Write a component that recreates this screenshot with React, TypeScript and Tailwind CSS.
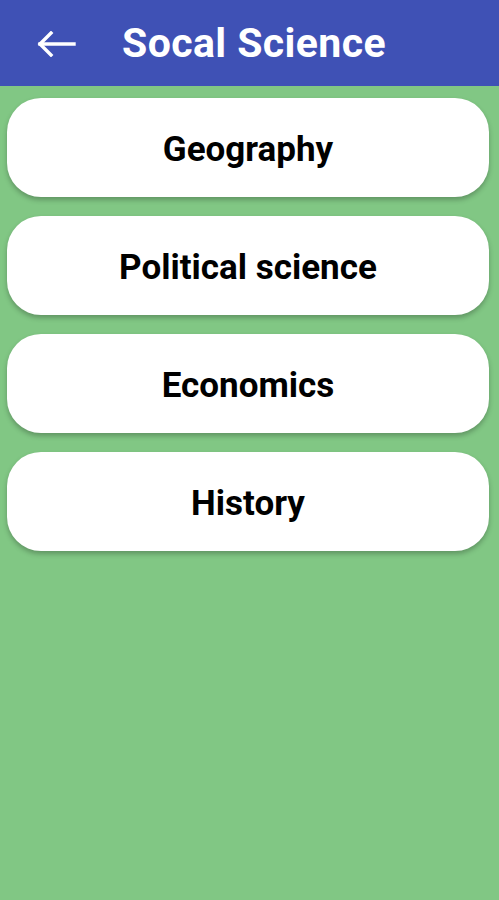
import React from 'react'

const subjects = ['Geography', 'Political science', 'Economics', 'History']

function BackArrow() {
  return (
    <svg width="40" height="26" viewBox="0 0 40 26" fill="none" stroke="white" strokeWidth="3.4" strokeLinecap="square">
      <path d="M3 13 H37" />
      <path d="M14 2 L3 13 L14 24" />
    </svg>
  )
}

export default function App() {
  return (
    <div className="w-[499px] h-[900px] bg-[#81c784] flex flex-col" style={{ fontFamily: 'Roboto, "Liberation Sans", sans-serif' }}>
      {/* App bar */}
      <div className="h-[86px] bg-[#3f51b5] flex items-center shrink-0">
        <div className="ml-[37px] mt-[1px] flex items-center">
          <BackArrow />
        </div>
        <h1 className="ml-[45px] mt-[1px] text-white text-[41px] font-bold tracking-[0.4px]">Socal Science</h1>
      </div>

      {/* Subject list */}
      <div className="flex flex-col gap-[19px] pl-[7px] pt-[12px]">
        {subjects.map(s => (
          <button
            key={s}
            className="h-[99px] w-[482px] bg-white rounded-[34px] flex items-center justify-center shadow-[0_3px_5px_rgba(0,0,0,0.25)]"
          >
            <span className="mt-[6px] text-[35px] font-bold text-black">{s}</span>
          </button>
        ))}
      </div>
    </div>
  )
}
